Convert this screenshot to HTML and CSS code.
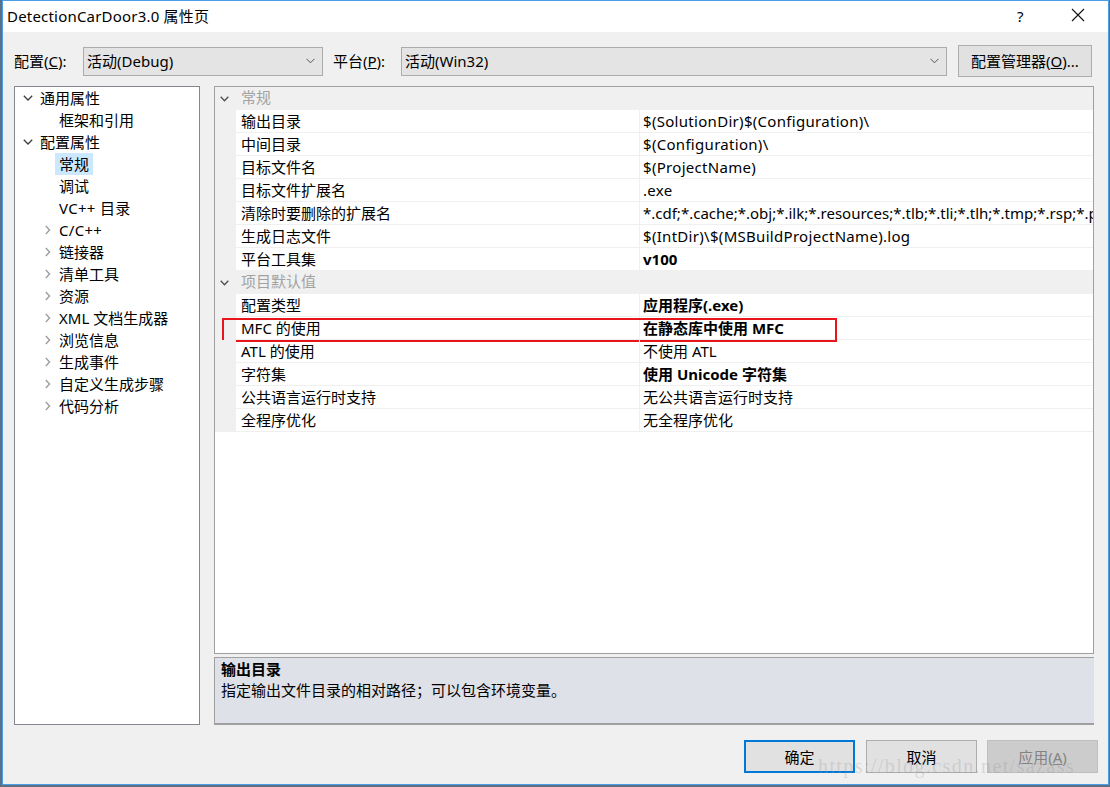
FILE: index.html
```html
<!DOCTYPE html>
<html lang="zh-CN">
<head>
<meta charset="utf-8">
<title>DetectionCarDoor3.0 属性页</title>
<link rel="stylesheet" href="styles.css">
</head>
<body>
<div class="dialog">
  <div class="titlebar">
    <span class="title">DetectionCarDoor3.0 属性页</span>
    <span class="help">?</span>
    <span class="close"><svg width="14" height="14" viewBox="0 0 14 14"><path d="M1 1 L13 13 M13 1 L1 13" stroke="#111" stroke-width="1.1" fill="none"/></svg></span>
  </div>
  <div class="client">
    <div class="toolbar">
      <span class="lbl lbl-config">配置(<u>C</u>):</span>
      <div class="combo combo-config"><span>活动(Debug)</span><svg class="dd" width="9" height="6" viewBox="0 0 9 6"><polyline points="0.5,0.8 4.5,4.8 8.5,0.8" fill="none" stroke="#555" stroke-width="1"/></svg></div>
      <span class="lbl lbl-platform">平台(<u>P</u>):</span>
      <div class="combo combo-platform"><span>活动(Win32)</span><svg class="dd" width="9" height="6" viewBox="0 0 9 6"><polyline points="0.5,0.8 4.5,4.8 8.5,0.8" fill="none" stroke="#555" stroke-width="1"/></svg></div>
      <div class="btn btn-mgr">配置管理器(<u>O</u>)...</div>
    </div>
    <div class="main">
      <div class="tree">
        <div class="tnode l0"><span class="ti"><svg width="10" height="6" viewBox="0 0 10 6"><polyline points="0.8,0.8 5,5 9.2,0.8" fill="none" stroke="#3c3c3c" stroke-width="1.3"/></svg></span><span class="tt">通用属性</span></div>
        <div class="tnode l1"><span class="ti"></span><span class="tt">框架和引用</span></div>
        <div class="tnode l0"><span class="ti"><svg width="10" height="6" viewBox="0 0 10 6"><polyline points="0.8,0.8 5,5 9.2,0.8" fill="none" stroke="#3c3c3c" stroke-width="1.3"/></svg></span><span class="tt">配置属性</span></div>
        <div class="tnode l1"><span class="ti"></span><span class="tt sel">常规</span></div>
        <div class="tnode l1"><span class="ti"></span><span class="tt">调试</span></div>
        <div class="tnode l1"><span class="ti"></span><span class="tt lat">VC++ 目录</span></div>
        <div class="tnode l1"><span class="ti"><svg class="cr" width="6" height="10" viewBox="0 0 6 10"><polyline points="0.8,1 4.6,5 0.8,9" fill="none" stroke="#9a9a9a" stroke-width="1.3"/></svg></span><span class="tt lat">C/C++</span></div>
        <div class="tnode l1"><span class="ti"><svg class="cr" width="6" height="10" viewBox="0 0 6 10"><polyline points="0.8,1 4.6,5 0.8,9" fill="none" stroke="#9a9a9a" stroke-width="1.3"/></svg></span><span class="tt">链接器</span></div>
        <div class="tnode l1"><span class="ti"><svg class="cr" width="6" height="10" viewBox="0 0 6 10"><polyline points="0.8,1 4.6,5 0.8,9" fill="none" stroke="#9a9a9a" stroke-width="1.3"/></svg></span><span class="tt">清单工具</span></div>
        <div class="tnode l1"><span class="ti"><svg class="cr" width="6" height="10" viewBox="0 0 6 10"><polyline points="0.8,1 4.6,5 0.8,9" fill="none" stroke="#9a9a9a" stroke-width="1.3"/></svg></span><span class="tt">资源</span></div>
        <div class="tnode l1"><span class="ti"><svg class="cr" width="6" height="10" viewBox="0 0 6 10"><polyline points="0.8,1 4.6,5 0.8,9" fill="none" stroke="#9a9a9a" stroke-width="1.3"/></svg></span><span class="tt">XML 文档生成器</span></div>
        <div class="tnode l1"><span class="ti"><svg class="cr" width="6" height="10" viewBox="0 0 6 10"><polyline points="0.8,1 4.6,5 0.8,9" fill="none" stroke="#9a9a9a" stroke-width="1.3"/></svg></span><span class="tt">浏览信息</span></div>
        <div class="tnode l1"><span class="ti"><svg class="cr" width="6" height="10" viewBox="0 0 6 10"><polyline points="0.8,1 4.6,5 0.8,9" fill="none" stroke="#9a9a9a" stroke-width="1.3"/></svg></span><span class="tt">生成事件</span></div>
        <div class="tnode l1"><span class="ti"><svg class="cr" width="6" height="10" viewBox="0 0 6 10"><polyline points="0.8,1 4.6,5 0.8,9" fill="none" stroke="#9a9a9a" stroke-width="1.3"/></svg></span><span class="tt">自定义生成步骤</span></div>
        <div class="tnode l1"><span class="ti"><svg class="cr" width="6" height="10" viewBox="0 0 6 10"><polyline points="0.8,1 4.6,5 0.8,9" fill="none" stroke="#9a9a9a" stroke-width="1.3"/></svg></span><span class="tt">代码分析</span></div>
      </div>
      <div class="rightcol">
        <div class="grid">
          <div class="prow cat"><span class="pm"><svg width="9" height="6" viewBox="0 0 9 6"><polyline points="0.7,0.8 4.5,4.8 8.3,0.8" fill="none" stroke="#505050" stroke-width="1.3"/></svg></span><span class="cattext">常规</span></div>
          <div class="prow"><span class="pm"></span><span class="pn">输出目录</span><span class="pv lat">$(SolutionDir)$(Configuration)\</span></div>
          <div class="prow"><span class="pm"></span><span class="pn">中间目录</span><span class="pv lat">$(Configuration)\</span></div>
          <div class="prow"><span class="pm"></span><span class="pn">目标文件名</span><span class="pv lat">$(ProjectName)</span></div>
          <div class="prow"><span class="pm"></span><span class="pn">目标文件扩展名</span><span class="pv lat">.exe</span></div>
          <div class="prow"><span class="pm"></span><span class="pn">清除时要删除的扩展名</span><span class="pv">*.cdf;*.cache;*.obj;*.ilk;*.resources;*.tlb;*.tli;*.tlh;*.tmp;*.rsp;*.pgc;*.pgd</span></div>
          <div class="prow"><span class="pm"></span><span class="pn">生成日志文件</span><span class="pv lat">$(IntDir)\$(MSBuildProjectName).log</span></div>
          <div class="prow"><span class="pm"></span><span class="pn">平台工具集</span><span class="pv b">v100</span></div>
          <div class="prow cat"><span class="pm"><svg width="9" height="6" viewBox="0 0 9 6"><polyline points="0.7,0.8 4.5,4.8 8.3,0.8" fill="none" stroke="#505050" stroke-width="1.3"/></svg></span><span class="cattext">项目默认值</span></div>
          <div class="prow"><span class="pm"></span><span class="pn">配置类型</span><span class="pv b">应用程序(.exe)</span></div>
          <div class="prow marked"><span class="pm"></span><span class="pn">MFC 的使用</span><span class="pv b">在静态库中使用 MFC</span><span class="annot"></span></div>
          <div class="prow"><span class="pm"></span><span class="pn">ATL 的使用</span><span class="pv">不使用 ATL</span></div>
          <div class="prow"><span class="pm"></span><span class="pn">字符集</span><span class="pv b">使用 Unicode 字符集</span></div>
          <div class="prow"><span class="pm"></span><span class="pn">公共语言运行时支持</span><span class="pv">无公共语言运行时支持</span></div>
          <div class="prow"><span class="pm"></span><span class="pn">全程序优化</span><span class="pv">无全程序优化</span></div>
        </div>
        <div class="desc">
          <div class="dtitle">输出目录</div>
          <div class="dtext">指定输出文件目录的相对路径；可以包含环境变量。</div>
        </div>
      </div>
    </div>
    <div class="buttons">
      <div class="btn btn-ok">确定</div>
      <div class="btn btn-cancel">取消</div>
      <div class="btn btn-apply">应用(<u>A</u>)</div>
    </div>
    <div class="watermark">https://blog.csdn.net/sazass</div>
  </div>
</div>
</body>
</html>
```
FILE: styles.css
```css
* { box-sizing: border-box; }
html, body { margin: 0; padding: 0; }
body {
  width: 1110px;
  height: 787px;
  background: #5d6f84;
  overflow: hidden;
  font-family: "Noto Sans", "Noto Sans CJK SC", sans-serif;
  font-size: 15px;
  color: #000;
}
.dialog {
  margin-left: 2px;
  width: 1107px;
  height: 785px;
  border: 1px solid #4a9ee6;
  background: #f0f0f0;
  display: flex;
  flex-direction: column;
  position: relative;
}
.titlebar {
  height: 31px;
  background: #fff;
  display: flex;
  align-items: center;
  padding-left: 4px;
  flex: none;
}
.title { font-size: 15px; line-height: 20px; flex: 1; margin-top: -1px; letter-spacing: 0.2px; }
.help { width: 20px; font-size: 15px; margin-right: 34px; margin-top: -1px; }
.close { width: 14px; height: 14px; display: flex; margin-right: 23px; margin-top: -3px; }
.client {
  flex: 1;
  display: flex;
  flex-direction: column;
  padding: 13px 0 11px 11px;
}
.toolbar {
  display: flex;
  align-items: center;
  height: 32px;
  flex: none;
}
.lbl { line-height: 20px; white-space: nowrap; }
.lbl-config { width: 69px; }
.lbl-platform { width: 68px; margin-left: 10px; }
.combo {
  height: 29px;
  background: #e4e4e4;
  border: 1px solid #acacac;
  display: flex;
  align-items: center;
  padding: 0 7px 0 3px;
  line-height: 20px;
}
.combo span { flex: 1; }
.combo-config { width: 240px; }
.combo-platform { width: 546px; }
.btn {
  display: flex;
  align-items: center;
  justify-content: center;
  background: #e1e1e1;
  border: 1px solid #adadad;
  line-height: 20px;
  white-space: nowrap;
}
.btn-mgr { width: 134px; height: 32px; margin-left: 11px; }
.main {
  display: flex;
  height: 639px;
  margin-top: 9px;
  flex: none;
}
.tree {
  width: 186px;
  background: #fff;
  border: 1px solid #828790;
}
.tnode {
  display: flex;
  align-items: center;
  height: 22px;
  line-height: 22px;
  white-space: nowrap;
}
.tnode.l0 { padding-left: 8px; }
.tnode.l1 { padding-left: 27px; }
.ti { width: 17px; flex: none; display: flex; align-items: center; }
.ti .cr { margin-left: 3px; }
.tt.sel { background: #cce8ff; margin-left: -4px; padding: 0 4px; height: 22px; }
.lat { letter-spacing: 0.3px; }
.rightcol {
  margin-left: 14px;
  width: 880px;
  display: flex;
  flex-direction: column;
}
.grid {
  height: 568px;
  background: #fff;
  border: 1px solid #a0a0a0;
  overflow: hidden;
}
.prow {
  display: grid;
  grid-template-columns: 21px 404px 1fr;
  height: 23px;
  line-height: 22px;
  white-space: nowrap;
  position: relative;
}
.pm { background: #f0f0f0; display: flex; align-items: center; padding-left: 5px; }
.pn { padding-left: 5px; border-right: 1px solid #f0f0f0; border-bottom: 1px solid #f0f0f0; overflow: hidden; }
.pv { padding-left: 3px; border-bottom: 1px solid #f0f0f0; overflow: hidden; }
.b { font-weight: bold; }
.prow.cat { background: #f0f0f0; grid-template-columns: 21px 1fr; }
.cattext { color: #a2a2a2; padding-left: 5px; line-height: 21px; }
.annot {
  position: absolute;
  left: 7px;
  top: 1px;
  width: 615px;
  height: 24px;
  border: 2px solid #e8151b;
  pointer-events: none;
}
.desc {
  margin-top: 3px;
  height: 68px;
  background: #dfe1e8;
  border-top: 1px solid #a0a0a0;
  border-left: 1px solid #a0a0a0;
  border-bottom: 2px solid #a0a0a0;
  padding: 1px 0 0 6px;
  line-height: 21px;
}
.dtitle { font-weight: bold; }
.buttons {
  display: flex;
  margin-top: 15px;
  height: 33px;
  padding-left: 730px;
  flex: none;
}
.buttons .btn { width: 111px; height: 33px; }
.btn-ok { border: 2px solid #0078d7; }
.btn-cancel { margin-left: 11px; }
.btn-apply { margin-left: 10px; background: #cccccc; border-color: #bfbfbf; color: #838383; }
.watermark {
  position: absolute;
  left: 815px;
  top: 754px;
  font-family: "Liberation Serif", serif;
  font-size: 20px;
  letter-spacing: 1.4px;
  color: rgba(150, 150, 150, 0.28);
  pointer-events: none;
  white-space: nowrap;
}
```
